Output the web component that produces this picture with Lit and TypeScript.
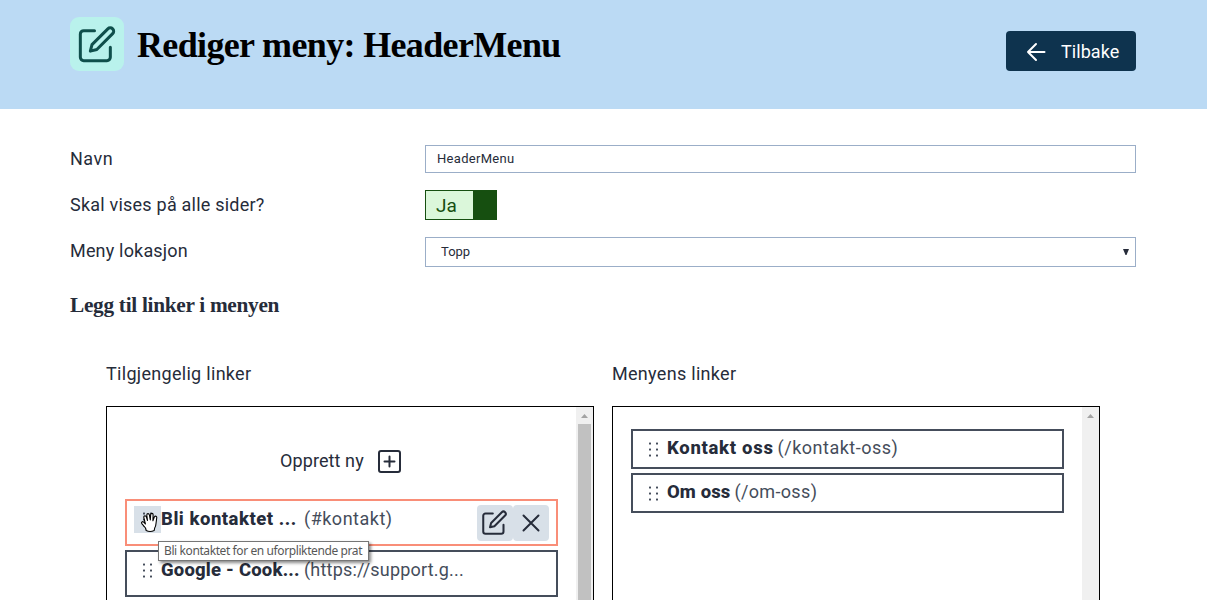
import { LitElement, html, css, svg } from "lit";
import { customElement, property } from "lit/decorators.js";

const editPaths = svg`
  <path d="M10.5 4H4A2 2 0 0 0 2 6V20A2 2 0 0 0 4 22H18A2 2 0 0 0 20 20V14" />
  <path d="M9 12.4L18.5 2.9a2.05 2.05 0 0 1 2.9 2.9L11.9 15.3L8 16.3Z" />
`;

@customElement("edit-icon")
class EditIcon extends LitElement {
  static styles = css`
    :host { display: block; }
    .icon { display: block; width: 100%; height: 100%; fill: none; stroke: currentColor; stroke-width: 1.8; stroke-linecap: round; stroke-linejoin: round; }
  `;
  render() {
    return html`<svg class="icon" viewBox="0 0 24 24">${editPaths}</svg>`;
  }
}

@customElement("drag-dots")
class DragDots extends LitElement {
  static styles = css`
    :host { display: block; width: 12px; height: 16px; }
    .icon { display: block; fill: #454d5b; }
  `;
  render() {
    return html`<svg class="icon" width="12" height="16" viewBox="0 0 12 16">
      ${[1, 7, 13].map((y) => svg`<rect x="1" y=${y - 0.5} width="2" height="2" rx=".5" /><rect x="8" y=${y - 0.5} width="2" height="2" rx=".5" />`)}
    </svg>`;
  }
}

@customElement("scroll-bar")
class ScrollBar extends LitElement {
  @property({ type: Boolean }) thumb = false;
  static styles = css`
    :host { display: flex; flex-direction: column; width: 17px; flex: none; background: #f0f0f0; }
    .up { display: block; width: 17px; height: 17px; fill: #a3a3a3; flex: none; }
    .thumb { flex: 1; margin: 0 2px; background: #c1c1c1; }
  `;
  render() {
    return html`<svg class="up" viewBox="0 0 17 17"><path d="M5 11L8.5 7L12 11Z" /></svg>
      ${this.thumb ? html`<div class="thumb"></div>` : ""}`;
  }
}

@customElement("app-root")
class AppRoot extends LitElement {
  static styles = css`
    :host { display: block; height: 600px; overflow: hidden; background: #fff; color: #262c3a; font-family: Roboto, "Liberation Sans", sans-serif; font-size: 18px; line-height: 22px; }
    * { box-sizing: border-box; }
    .header { height: 109px; background: #bbdaf4; padding: 17px 71px 0 70px; display: flex; align-items: flex-start; }
    .badge { width: 54px; height: 54px; border-radius: 9px; background: #b9f2ec; color: #0f4f4b; padding: 7px; }
    .badge-icon { width: 40px; height: 40px; }
    .title { margin: 6px 0 0 13px; font: bold 36px/44px "Liberation Serif", serif; letter-spacing: -.65px; color: #000; white-space: nowrap; }
    .back { margin: 14px 0 0 auto; width: 130px; height: 40px; border: 0; border-radius: 4px; background: #0e334e; color: #fff; font: 400 18px/22px Roboto, sans-serif; display: flex; align-items: center; padding: 1px 0 0 20px; gap: 15px; letter-spacing: .05px; }
    .arrow { width: 20px; height: 20px; fill: none; stroke: currentColor; stroke-width: 2; stroke-linecap: round; stroke-linejoin: round; }
    .body { padding: 36px 71px 0 70px; }
    .row { display: grid; grid-template-columns: 355px 1fr; align-items: center; }
    .name { height: 28px; }
    .show { height: 30px; margin-top: 17px; }
    .place { height: 30px; margin-top: 17px; }
    .label { white-space: nowrap; }
    .l1 { letter-spacing: .5px; }
    .l2 { letter-spacing: .22px; }
    .l3 { letter-spacing: .18px; padding-bottom: 2px; }
    .field { height: 100%; border: 1px solid #9baec8; display: flex; align-items: center; font-size: 13px; }
    .text { padding: 0 0 1px 11px; letter-spacing: .3px; }
    .select { padding: 0 6px 0 15px; justify-content: space-between; }
    .caret { width: 6px; height: 6px; fill: #262c3a; }
    .toggle { width: 72px; height: 30px; display: flex; border: 1px solid #164f10; border-width: 1px 0 1px 1px; background: #dbf7da; color: #164f10; }
    .on { width: 47px; padding: 4px 0 0 10px; font-size: 19px; }
    .knob { flex: 1; background: #164f10; }
    .sub { margin: 24px 0 0; font: bold 21.3px/28px "Liberation Serif", serif; letter-spacing: -.29px; }
    .columns { display: grid; grid-template-columns: 488px 488px; gap: 18px; margin: 44px 0 0 36px; }
    .c1 { letter-spacing: .3px; }
    .c2 { letter-spacing: .3px; }
    .n1 { letter-spacing: .1px; padding-bottom: 1px; }
    .panel { margin-top: 21px; height: 220px; border: 1px solid #000; display: flex; }
    .list { flex: 1; min-width: 0; padding: 22px 18px 0; display: flex; flex-direction: column; gap: 4px; }
    .new { height: 66px; display: flex; align-items: center; padding: 0 0 1px 155px; gap: 14px; white-space: nowrap; }
    .plus { width: 23px; height: 23px; fill: none; stroke: currentColor; stroke-width: 2; stroke-linecap: round; }
    .item { position: relative; height: 40px; flex: none; border: 2px solid #454d5b; display: flex; align-items: flex-start; white-space: nowrap; }
    .tall { height: 47px; }
    .active { border-color: #f98e78; }
    .handle { width: 27px; height: 27px; margin: 5px 0 0 7px; display: flex; align-items: center; justify-content: center; flex: none; }
    .hot { background: #d8e0e8; }
    .itext { margin-top: 6px; display: flex; gap: 4px; }
    .tall .itext { margin-top: 7px; }
    .bold { font-weight: 800; font-size: 18.5px; }
    .url { color: #454d5b; }
    .fixed { width: 139px; }
    .b1 { letter-spacing: .5px; }
    .b2 { letter-spacing: .2px; }
    .b3 { letter-spacing: .7px; }
    .b4 { letter-spacing: .1px; }
    .u1 { letter-spacing: .5px; }
    .u3 { letter-spacing: .5px; }
    .u4 { letter-spacing: .35px; }
    .u2 { letter-spacing: .2px; }
    .actions { margin: 4px 7px 0 auto; display: flex; }
    .act { width: 36px; height: 36px; border-radius: 4px; background: #d8e0e8; display: flex; align-items: center; justify-content: center; padding: 0 1px 1px 0; }
    .act-icon { width: 27px; height: 27px; }
    .cross { width: 18px; height: 18px; stroke: currentColor; stroke-width: 2; stroke-linecap: round; }
    .cursor { position: absolute; left: 13px; top: 11px; width: 20px; height: 21px; z-index: 2; }
    .tip { position: absolute; left: 31px; top: 40px; z-index: 3; width: 211px; height: 20px; border: 1px solid #767676; background: #fff; box-shadow: 2px 2px 3px #0007; color: #575757; font: 12px/18px "Noto Sans", sans-serif; letter-spacing: -.4px; padding-left: 5px; }
  `;

  render() {
    return html`
      <header class="header">
        <div class="badge"><edit-icon class="badge-icon"></edit-icon></div>
        <h1 class="title">Rediger meny: HeaderMenu</h1>
        <button class="back">
          <svg class="arrow" viewBox="0 0 20 20"><path d="M18.5 10H2M10 2L2 10L10 18" /></svg>
          <span>Tilbake</span>
        </button>
      </header>
      <main class="body">
        <div class="row name"><span class="label l1">Navn</span><div class="field text">HeaderMenu</div></div>
        <div class="row show"><span class="label l2">Skal vises på alle sider?</span><div class="toggle"><span class="on">Ja</span><span class="knob"></span></div></div>
        <div class="row place"><span class="label l3">Meny lokasjon</span>
          <div class="field select"><span>Topp</span><svg class="caret" viewBox="0 0 6 6"><path d="M0 0H6L3.5 6H2.5Z" /></svg></div>
        </div>
        <h2 class="sub">Legg til linker i menyen</h2>
        <section class="columns">
          <div>
            <div class="label c1">Tilgjengelig linker</div>
            <div class="panel">
              <div class="list">
                <div class="new"><span class="n1">Opprett ny</span>
                  <svg class="plus" viewBox="0 0 23 23"><rect x="1" y="1" width="21" height="21" rx="2" /><path d="M11.5 6.5V16.5M6.5 11.5H16.5" /></svg>
                </div>
                <div class="item tall active">
                  <div class="handle hot"><drag-dots></drag-dots></div>
                  <div class="itext"><span class="bold fixed b1">Bli kontaktet ...</span><span class="url u1">(#kontakt)</span></div>
                  <div class="actions">
                    <div class="act"><edit-icon class="act-icon"></edit-icon></div>
                    <div class="act"><svg class="cross" viewBox="0 0 18 18"><path d="M1.5 1.5L16.5 16.5M16.5 1.5L1.5 16.5" /></svg></div>
                  </div>
                  <svg class="cursor" viewBox="0 0 20 21"><path d="M6.2 18.5L5.5 16L2 11.8Q1 10.2 2.4 9.7Q3.6 9.4 5.4 12L3.8 5.3Q3.8 3.7 5 3.7Q6 3.8 6.4 5L7.5 8.5L6.8 3Q6.8 1.6 8 1.6Q9.1 1.6 9.4 3L10.3 8L10.7 2.5Q11 1.3 12 1.4Q13.2 1.6 13.1 3L12.9 8.7L14.3 5Q15 3.8 16 4.2Q17 4.7 16.7 6L16 11.5Q15.8 14.5 14.7 16L14.2 18.5Q10 20.4 6.2 18.5Z" fill="#fff" stroke="#000" stroke-width="1.1" stroke-linejoin="round" /></svg>
                  <div class="tip">Bli kontaktet for en uforpliktende prat</div>
                </div>
                <div class="item tall">
                  <div class="handle"><drag-dots></drag-dots></div>
                  <div class="itext"><span class="bold fixed b2">Google - Cook...</span><span class="url u2">(https://support.g...</span></div>
                </div>
              </div>
              <scroll-bar thumb></scroll-bar>
            </div>
          </div>
          <div>
            <div class="label c2">Menyens linker</div>
            <div class="panel">
              <div class="list">
                <div class="item"><div class="handle"><drag-dots></drag-dots></div>
                  <div class="itext"><span class="bold b3">Kontakt oss</span><span class="url u3">(/kontakt-oss)</span></div></div>
                <div class="item"><div class="handle"><drag-dots></drag-dots></div>
                  <div class="itext"><span class="bold b4">Om oss</span><span class="url u4">(/om-oss)</span></div></div>
              </div>
              <scroll-bar></scroll-bar>
            </div>
          </div>
        </section>
      </main>
    `;
  }
}
